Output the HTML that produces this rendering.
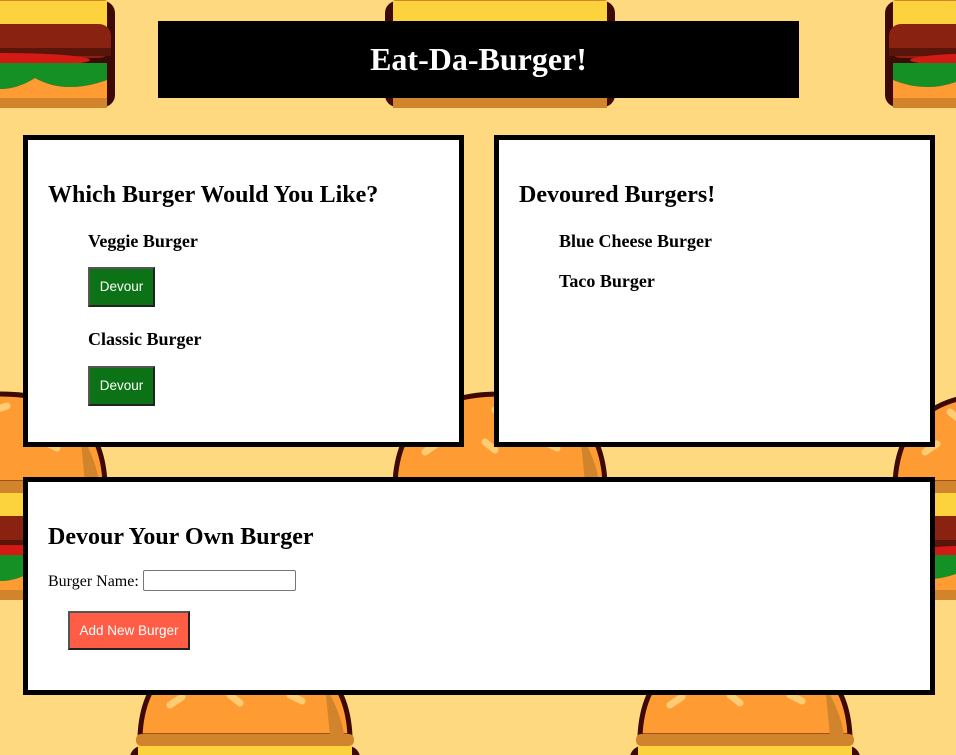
<!DOCTYPE html>
<html style="overflow:hidden"><head><style>
body{margin:0;width:956px;height:755px;background:#fed97f;position:relative;overflow:hidden;font-family:"Liberation Serif",serif}
.bg{position:absolute;left:0;top:0}
.hdr{position:absolute;left:158px;top:21px;width:641px;height:77px;background:#000;color:#fff;font-weight:bold;font-size:32px;text-align:center;line-height:77px}
.panel{position:absolute;background:#fff;border:5px solid #000;box-sizing:border-box}
h2{position:absolute;margin:0;font-size:24px;font-weight:bold;left:20px}
.it{position:absolute;font-weight:bold;font-size:18px;left:60px}
.btn{position:absolute;left:60px;width:67px;height:40px;background:#0b7216;border:2px solid #555;box-sizing:border-box;border-right-color:#222;border-bottom-color:#222;color:#fff;font-family:"Liberation Sans",sans-serif;font-size:13.5px;text-align:center;line-height:36px}
</style></head><body>
<svg class="bg" width="956" height="755">
<defs>
<g id="b">
<path d="M10 91 Q14 2 115 2 Q216 2 220 91 Z" fill="#fe9b33" stroke="#3d0a08" stroke-width="5"/>
<path d="M195 40 Q212 70 214 91 L200 91 Z" fill="#d2842c"/>
<rect x="6" y="89" width="218" height="12" rx="5" fill="#d2842c"/>
<g stroke="#fed27a" stroke-width="7" stroke-linecap="round" opacity=".9"><line x1="40" y1="60" x2="52" y2="52"/><line x1="65" y1="20" x2="75" y2="28"/><line x1="110" y1="18" x2="122" y2="14"/><line x1="150" y1="20" x2="165" y2="24"/><line x1="100" y1="50" x2="110" y2="58"/><line x1="160" y1="50" x2="172" y2="56"/></g>
<rect x="0" y="101" width="230" height="106" rx="12" fill="#3d0a08"/>
<path d="M8 101 H222 V128 L115 150 L8 128 Z" fill="#fcd33d"/>
<rect x="4" y="124" width="222" height="34" rx="12" fill="#8a2211"/>
<rect x="4" y="148" width="222" height="8" fill="#5a150b"/>
<ellipse cx="115" cy="160" rx="90" ry="7" fill="#d41a14"/>
<path d="M8 163 H222 V180 Q180 195 150 178 Q115 200 80 178 Q45 195 8 180 Z" fill="#159024"/>
<path d="M8 180 Q45 195 80 178 Q115 200 150 178 Q180 195 222 180 V198 Q222 208 210 208 H20 Q8 208 8 198 Z" fill="#fe9b33"/>
<rect x="8" y="198" width="214" height="10" fill="#d2842c"/>
</g>
</defs>
<use href="#b" x="-115" y="-100"/><use href="#b" x="385" y="-100"/><use href="#b" x="885" y="-100"/>
<use href="#b" x="-115" y="392"/><use href="#b" x="385" y="392"/><use href="#b" x="885" y="392"/>
<use href="#b" x="130" y="645"/><use href="#b" x="630" y="645"/>
</svg>
<div class="hdr">Eat-Da-Burger!</div>
<div class="panel" style="left:23px;top:135px;width:441px;height:312px">
<h2 style="top:42px">Which Burger Would You Like?</h2>
<div class="it" style="top:91px">Veggie Burger</div>
<div class="btn" style="top:127px">Devour</div>
<div class="it" style="top:189px">Classic Burger</div>
<div class="btn" style="top:226px">Devour</div>
</div>
<div class="panel" style="left:494px;top:135px;width:441px;height:312px">
<h2 style="top:42px">Devoured Burgers!</h2>
<div class="it" style="top:91px">Blue Cheese Burger</div>
<div class="it" style="top:131px">Taco Burger</div>
</div>
<div class="panel" style="left:23px;top:477px;width:912px;height:218px">
<h2 style="top:42px">Devour Your Own Burger</h2>
<div style="position:absolute;left:20px;top:91px;font-size:16px">Burger Name:</div>
<div style="position:absolute;left:115px;top:88px;width:153px;height:21px;border:1px solid #767676;border-radius:2px;box-sizing:border-box"></div>
<div class="btn" style="left:40px;top:129px;width:122px;height:39px;background:#ff5d45;line-height:35px">Add New Burger</div>
</div>
</body></html>
